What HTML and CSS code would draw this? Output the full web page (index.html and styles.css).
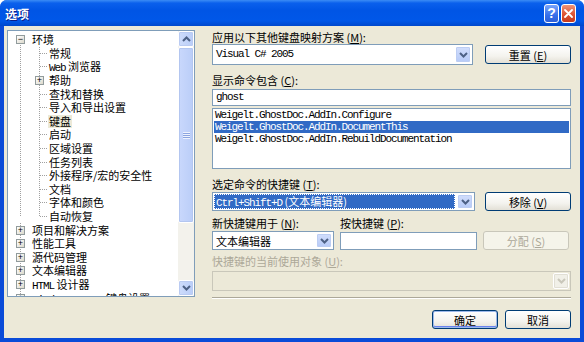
FILE: index.html
```html
<!DOCTYPE html>
<html lang="zh-CN">
<head>
    <meta charset="UTF-8">
    <title>选项</title>
    <link rel="stylesheet" href="styles.css">
</head>
<body>
<div class="window">
    <!-- title bar -->
    <div class="titlebar">
        <span class="title">选项</span>
        <div class="caption-btns">
            <span class="cap help">?</span>
            <span class="cap close">
                <svg width="9" height="9" viewBox="0 0 9 9"><path d="M1 1 L8 8 M8 1 L1 8" stroke="#fff" stroke-width="1.8" stroke-linecap="round"/></svg>
            </span>
        </div>
    </div>

    <div class="client">
        <div class="main">
            <!-- options tree -->
            <div class="tree">
                <div class="tree-view">
                    <ul class="root">
                        <li class="open">
                            <div class="row first"><span class="box">&minus;</span><span class="lbl">环境</span></div>
                            <ul class="sub">
                                <li><div class="row"><span class="tick"></span><span class="lbl">常规</span></div></li>
                                <li><div class="row"><span class="tick"></span><span class="lbl"><span class="en">Web</span> 浏览器</span></div></li>
                                <li><div class="row"><span class="box">+</span><span class="lbl">帮助</span></div></li>
                                <li><div class="row"><span class="tick"></span><span class="lbl">查找和替换</span></div></li>
                                <li><div class="row"><span class="tick"></span><span class="lbl">导入和导出设置</span></div></li>
                                <li><div class="row"><span class="tick"></span><span class="lbl sel">键盘</span></div></li>
                                <li><div class="row"><span class="tick"></span><span class="lbl">启动</span></div></li>
                                <li><div class="row"><span class="tick"></span><span class="lbl">区域设置</span></div></li>
                                <li><div class="row"><span class="tick"></span><span class="lbl">任务列表</span></div></li>
                                <li><div class="row"><span class="tick"></span><span class="lbl">外接程序/宏的安全性</span></div></li>
                                <li><div class="row"><span class="tick"></span><span class="lbl">文档</span></div></li>
                                <li><div class="row"><span class="tick"></span><span class="lbl">字体和颜色</span></div></li>
                                <li class="last"><div class="row"><span class="tick"></span><span class="lbl">自动恢复</span></div></li>
                            </ul>
                        </li>
                        <li><div class="row"><span class="box">+</span><span class="lbl">项目和解决方案</span></div></li>
                        <li><div class="row"><span class="box">+</span><span class="lbl">性能工具</span></div></li>
                        <li><div class="row"><span class="box">+</span><span class="lbl">源代码管理</span></div></li>
                        <li><div class="row"><span class="box">+</span><span class="lbl">文本编辑器</span></div></li>
                        <li><div class="row"><span class="box">+</span><span class="lbl"><span class="en">HTML</span> 设计器</span></div></li>
                        <li><div class="row"><span class="box">+</span><span class="lbl"><span class="en">Windows Forms</span> 键盘设置</span></div></li>
                    </ul>
                </div>
                <div class="scrollbar">
                    <span class="sb-btn">
                        <svg width="9" height="6" viewBox="0 0 9 6"><path d="M1 5 L4.5 1.5 L8 5" fill="none" stroke="#4D6185" stroke-width="2"/></svg>
                    </span>
                    <div class="sb-track">
                        <div class="sb-thumb"><span class="grip"></span></div>
                    </div>
                    <span class="sb-btn">
                        <svg width="9" height="6" viewBox="0 0 9 6"><path d="M1 1 L4.5 4.5 L8 1" fill="none" stroke="#4D6185" stroke-width="2"/></svg>
                    </span>
                </div>
            </div>

            <!-- keyboard page -->
            <div class="panel">
                <div class="label l1">应用以下其他键盘映射方案 (<u>M</u>):</div>
                <div class="line r1">
                    <div class="combo c1">
                        <span class="combo-text mono">Visual C# 2005</span>
                        <span class="drop"><svg width="9" height="6" viewBox="0 0 9 6"><path d="M1 1 L4.5 4.5 L8 1" fill="none" stroke="#4D6185" stroke-width="2"/></svg></span>
                    </div>
                    <button class="btn">重置 (<u>E</u>)</button>
                </div>

                <div class="label l2">显示命令包含 (<u>C</u>):</div>
                <div class="textbox ghost mono">ghost</div>
                <div class="listbox mono">
                    <div class="item">Weigelt.GhostDoc.AddIn.Configure</div>
                    <div class="item selected">Weigelt.GhostDoc.AddIn.DocumentThis</div>
                    <div class="item">Weigelt.GhostDoc.AddIn.RebuildDocumentation</div>
                </div>

                <div class="label l3">选定命令的快捷键 (<u>T</u>):</div>
                <div class="line r2">
                    <div class="combo c2">
                        <span class="combo-text focus"><span class="mono">Ctrl+Shift+D</span> (文本编辑器)</span>
                        <span class="drop"><svg width="9" height="6" viewBox="0 0 9 6"><path d="M1 1 L4.5 4.5 L8 1" fill="none" stroke="#4D6185" stroke-width="2"/></svg></span>
                    </div>
                    <button class="btn">移除 (<u>V</u>)</button>
                </div>

                <div class="line l4">
                    <div class="label scope">新快捷键用于 (<u>N</u>):</div>
                    <div class="label">按快捷键 (<u>P</u>):</div>
                </div>
                <div class="line r3">
                    <div class="combo c3">
                        <span class="combo-text">文本编辑器</span>
                        <span class="drop"><svg width="9" height="6" viewBox="0 0 9 6"><path d="M1 1 L4.5 4.5 L8 1" fill="none" stroke="#4D6185" stroke-width="2"/></svg></span>
                    </div>
                    <div class="textbox keys"></div>
                    <button class="btn" disabled>分配 (<u>S</u>)</button>
                </div>

                <div class="label l5 off">快捷键的当前使用对象 (<u>U</u>):</div>
                <div class="combo c4 off">
                    <span class="combo-text"></span>
                    <span class="drop"><svg width="9" height="6" viewBox="0 0 9 6"><path d="M1 1 L4.5 4.5 L8 1" fill="none" stroke="#C9C7BA" stroke-width="2"/></svg></span>
                </div>

                <div class="separator"></div>
                <div class="line actions">
                    <button class="btn default">确定</button>
                    <button class="btn">取消</button>
                </div>
            </div>
        </div>
    </div>
</div>
</body>
</html>
```

FILE: styles.css
```css
* {
    box-sizing: border-box;
}
body {
    margin: 0;
    font-family: "Noto Sans CJK SC", sans-serif;
    font-size: 11px;
    color: #000;
    background: #fff;
}
ul {
    list-style: none;
    margin: 0;
    padding: 0;
}
u {
    text-decoration: underline;
}
.mono, .en {
    font-family: "Liberation Mono", "Noto Sans CJK SC", monospace;
    font-size: 11px;
    letter-spacing: -1.1px;
}

/* window frame */
.window {
    width: 584px;
    height: 342px;
    display: flex;
    flex-direction: column;
    background: #0A4BD8;
    border-radius: 7px 7px 0 0;
    overflow: hidden;
}
.titlebar {
    height: 26px;
    flex: none;
    display: flex;
    align-items: center;
    padding: 0 8px 0 5px;
    background: linear-gradient(to bottom, #3B8CF5 0%, #0A60EC 12%, #0055E5 40%, #0057E8 80%, #0048CC 100%);
}
.title {
    flex: 1;
    color: #fff;
    font-weight: bold;
    font-size: 12px;
    text-shadow: 1px 1px 0 #0A1E8A;
}
.caption-btns {
    display: flex;
    gap: 2px;
}
.cap {
    width: 15px;
    height: 19px;
    border: 1px solid #fff;
    border-radius: 3px;
    display: flex;
    align-items: center;
    justify-content: center;
}
.help {
    background: linear-gradient(to bottom, #7BA5FB, #3670EA 60%, #2C5FD8);
    color: #fff;
    font-family: "Liberation Sans", sans-serif;
    font-weight: bold;
    font-size: 14px;
}
.close {
    background: linear-gradient(to bottom, #F09478, #DD5434 55%, #C6391C);
}
.client {
    flex: 1;
    margin: 0 4px 4px;
    background: #ECE9D8;
    padding: 4px 0 0 3px;
}
.main {
    display: flex;
    gap: 17px;
}

/* tree */
.tree {
    width: 188px;
    height: 267px;
    border: 1px solid #7F9DB9;
    background: #fff;
    display: flex;
}
.tree-view {
    flex: 1;
    overflow: hidden;
    padding-top: 2px;
}
.root {
    background: linear-gradient(#a0a0a0 50%, transparent 50%) 12px 0 / 1px 2px repeat-y;
}
.row {
    height: 13.6px;
    line-height: 13.6px;
    display: flex;
    align-items: center;
    white-space: nowrap;
}
.row.first {
    background: linear-gradient(#fff 7px, transparent 7px);
}
.box {
    width: 9px;
    height: 9px;
    margin: 0 6px 0 8px;
    border: 1px solid #919B9C;
    background: linear-gradient(135deg, #fff, #DCD9CC);
    font-family: "Liberation Sans", sans-serif;
    font-size: 9px;
    line-height: 7px;
    text-align: center;
    color: #000;
    flex: none;
}
.sub {
    background: linear-gradient(#a0a0a0 50%, transparent 50%) 31px 0 / 1px 2px repeat-y;
}
.sub .box {
    margin-left: 27px;
    margin-right: 4px;
}
.sub li.last {
    background: linear-gradient(transparent 7px, #fff 7px);
}
.tick {
    width: 7px;
    margin: 0 1px 0 32px;
    border-top: 1px dotted #a0a0a0;
    flex: none;
}
.lbl {
    padding: 0 1px;
    height: 13px;
    line-height: 13px;
}
.lbl.sel {
    background: #ECE9D8;
}

/* scrollbar */
.scrollbar {
    width: 16px;
    flex: none;
    display: flex;
    flex-direction: column;
    background: #F3F2EC;
}
.sb-btn {
    height: 16px;
    flex: none;
    display: flex;
    align-items: center;
    justify-content: center;
    border: 1px solid #fff;
    border-radius: 2px;
    background: linear-gradient(to right, #CEDCFB, #B9CDF8);
    box-shadow: inset 0 0 0 1px #BACBF2;
}
.sb-track {
    flex: 1;
    padding-bottom: 57px;
    display: flex;
}
.sb-thumb {
    flex: 1;
    border: 1px solid #fff;
    border-radius: 2px;
    background: linear-gradient(to right, #C9D8FC, #BACDF8);
    box-shadow: inset 0 0 0 1px #B3C6F0;
    display: flex;
    align-items: center;
    justify-content: center;
}
.grip {
    width: 7px;
    height: 7px;
    background: repeating-linear-gradient(to bottom, #EEF3FE 0 1px, #8CA5E0 1px 2px);
}

/* right page */
.panel {
    width: 359px;
    display: flex;
    flex-direction: column;
}
.label {
    height: 14px;
    line-height: 14px;
    white-space: nowrap;
}
.label.off {
    color: #ACA899;
}
.line {
    display: flex;
    align-items: center;
}
.r1 {
    height: 21px;
    gap: 12px;
}
.l2 {
    margin-top: 8px;
}
.l3 {
    margin-top: 8px;
}
.r2 {
    height: 19px;
    margin-top: 1px;
    gap: 10px;
}
.l4 {
    margin-top: 5px;
}
.scope {
    width: 128px;
}
.r3 {
    height: 19px;
    margin-top: 1px;
    gap: 6px;
}
.l5 {
    margin-top: 4px;
}

.combo {
    height: 100%;
    border: 1px solid #7F9DB9;
    background: #fff;
    display: flex;
    align-items: center;
    padding: 1px;
}
.combo-text {
    flex: 1;
    height: 100%;
    line-height: 17px;
    padding-left: 2px;
    white-space: nowrap;
    overflow: hidden;
}
.drop {
    width: 16px;
    height: 100%;
    flex: none;
    display: flex;
    align-items: center;
    justify-content: center;
    border: 1px solid #fff;
    border-radius: 2px;
    background: linear-gradient(to bottom, #D2DEFC, #B6CAF7);
    box-shadow: inset 0 0 0 1px #BCCDF3;
}
.c1 {
    width: 261px;
}
.c2 {
    width: 263px;
}
.c2 .combo-text {
    line-height: 15px;
}
.focus {
    background: #316AC5;
    color: #fff;
    outline: 1px dotted #fff;
    outline-offset: -1px;
    margin-right: 2px;
}
.c3 {
    width: 122px;
}
.c4 {
    height: 20px;
    margin-top: 3px;
    border-color: #C9C7BA;
    background: #ECE9D8;
}
.c4 .drop {
    background: #F1F0E8;
    box-shadow: inset 0 0 0 1px #E1DFD5;
}

.textbox {
    border: 1px solid #7F9DB9;
    background: #fff;
}
.ghost {
    height: 17px;
    line-height: 15px;
    margin-top: 2px;
    padding-left: 3px;
}
.keys {
    width: 137px;
    height: 18px;
}
.listbox {
    height: 61px;
    margin-top: 2px;
    border: 1px solid #7F9DB9;
    background: #fff;
    padding: 0 1px;
}
.item {
    height: 12px;
    line-height: 12px;
    padding-left: 1px;
    white-space: nowrap;
}
.item.selected {
    background: #316AC5;
    color: #fff;
}

.btn {
    width: 86px;
    height: 19px;
    padding: 0;
    border: 1px solid #003C74;
    border-radius: 3px;
    background: linear-gradient(to bottom, #FFFFFF 0%, #F4F3EE 60%, #E3E0D6 100%);
    font-family: inherit;
    font-size: 11px;
    color: #000;
    white-space: nowrap;
}
.btn:disabled {
    border-color: #C9C7BA;
    background: #F5F4EA;
    color: #ACA899;
}
.separator {
    height: 2px;
    margin-top: 6px;
    border-top: 1px solid #ACA899;
    border-bottom: 1px solid #fff;
}
.actions {
    justify-content: flex-end;
    gap: 7px;
    margin-top: 11px;
}
.actions .btn {
    width: 66px;
}
.btn.default {
    box-shadow: inset 0 0 0 1px #9DB9EB, inset 0 -1px 0 1px #6982EE;
}
```
